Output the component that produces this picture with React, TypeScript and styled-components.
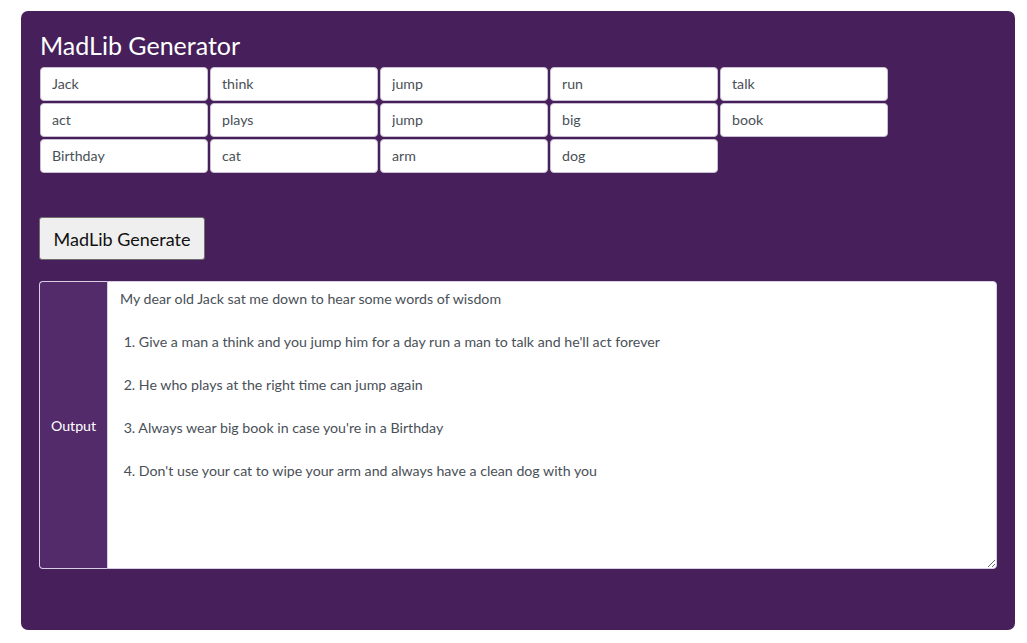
import { useState } from 'react';
import styled, { createGlobalStyle } from 'styled-components';

const GlobalStyle = createGlobalStyle`
  html, body {
    margin: 0;
    padding: 0;
    background: #fff;
    font-family: "Segoe UI", Lato, "Open Sans", sans-serif;
  }
`;

const Page = styled.div`
  padding: 11px 12px 13px 21px;
`;

const Card = styled.div`
  background-color: #47205b;
  border-radius: 7px;
  padding: 19px 18px 61px 18px;
  height: 619px;
  box-sizing: border-box;
`;

const Title = styled.h1`
  margin: 0 0 7px 1px;
  color: #fff;
  font-size: 25px;
  font-weight: 400;
  line-height: 30px;
`;

const WordGrid = styled.div`
  display: grid;
  grid-template-columns: repeat(5, 168px);
  grid-auto-rows: 34px;
  gap: 2px 2px;
  padding-left: 1px;
`;

const WordInput = styled.input`
  box-sizing: border-box;
  width: 168px;
  height: 34px;
  padding: 0 11px 2px;
  border: 1px solid #c9bfd2;
  border-radius: 4px;
  background: #fff;
  color: #495057;
  font-family: inherit;
  font-size: 14.2px;
  outline: none;
`;

const GenerateButton = styled.button`
  margin-top: 44px;
  box-sizing: border-box;
  width: 166px;
  height: 43px;
  background-color: #efefef;
  border: 1px solid #6e6e6e;
  border-radius: 3px;
  color: #111;
  font-family: inherit;
  font-size: 18px;
  cursor: pointer;
`;

const OutputGroup = styled.div`
  display: flex;
  margin-top: 21px;
  height: 288px;
`;

const OutputLabel = styled.div`
  box-sizing: border-box;
  width: 68px;
  display: flex;
  align-items: center;
  justify-content: center;
  background-color: #532b6b;
  border: 1px solid #d9cde3;
  border-right: none;
  border-radius: 4px 0 0 4px;
  color: #fff;
  font-size: 14.2px;
`;

const OutputText = styled.textarea`
  flex: 1;
  box-sizing: border-box;
  margin: 0;
  padding: 6px 12px;
  border: 1px solid #d9cde3;
  border-radius: 0 4px 4px 0;
  background: #fff;
  color: #495057;
  font-family: inherit;
  font-size: 14.2px;
  line-height: 21.5px;
  outline: none;
  resize: vertical;
`;

const initialWords = [
  'Jack', 'think', 'jump', 'run', 'talk',
  'act', 'plays', 'jump', 'big', 'book',
  'Birthday', 'cat', 'arm', 'dog',
];

const buildStory = (w: string[]) =>
  `My dear old ${w[0]} sat me down to hear some words of wisdom\n\n` +
  ` 1. Give a man a ${w[1]} and you ${w[2]} him for a day ${w[3]} a man to ${w[4]} and he'll ${w[5]} forever\n\n` +
  ` 2. He who ${w[6]} at the right time can ${w[7]} again\n\n` +
  ` 3. Always wear ${w[8]} ${w[9]} in case you're in a ${w[10]}\n\n` +
  ` 4. Don't use your ${w[11]} to wipe your ${w[12]} and always have a clean ${w[13]} with you`;

const App = () => {
  const [words, setWords] = useState(initialWords);
  const [story, setStory] = useState(buildStory(initialWords));

  const handleChange = (i: number, value: string) => {
    const next = [...words];
    next[i] = value;
    setWords(next);
  };

  return (
    <Page>
      <GlobalStyle />
      <Card>
        <Title>MadLib Generator</Title>
        <WordGrid>
          {words.map((word, i) => (
            <WordInput key={i} value={word} onChange={(e) => handleChange(i, e.target.value)} />
          ))}
        </WordGrid>
        <GenerateButton onClick={() => setStory(buildStory(words))}>MadLib Generate</GenerateButton>
        <OutputGroup>
          <OutputLabel>Output</OutputLabel>
          <OutputText value={story} readOnly />
        </OutputGroup>
      </Card>
    </Page>
  );
};

export default App;
